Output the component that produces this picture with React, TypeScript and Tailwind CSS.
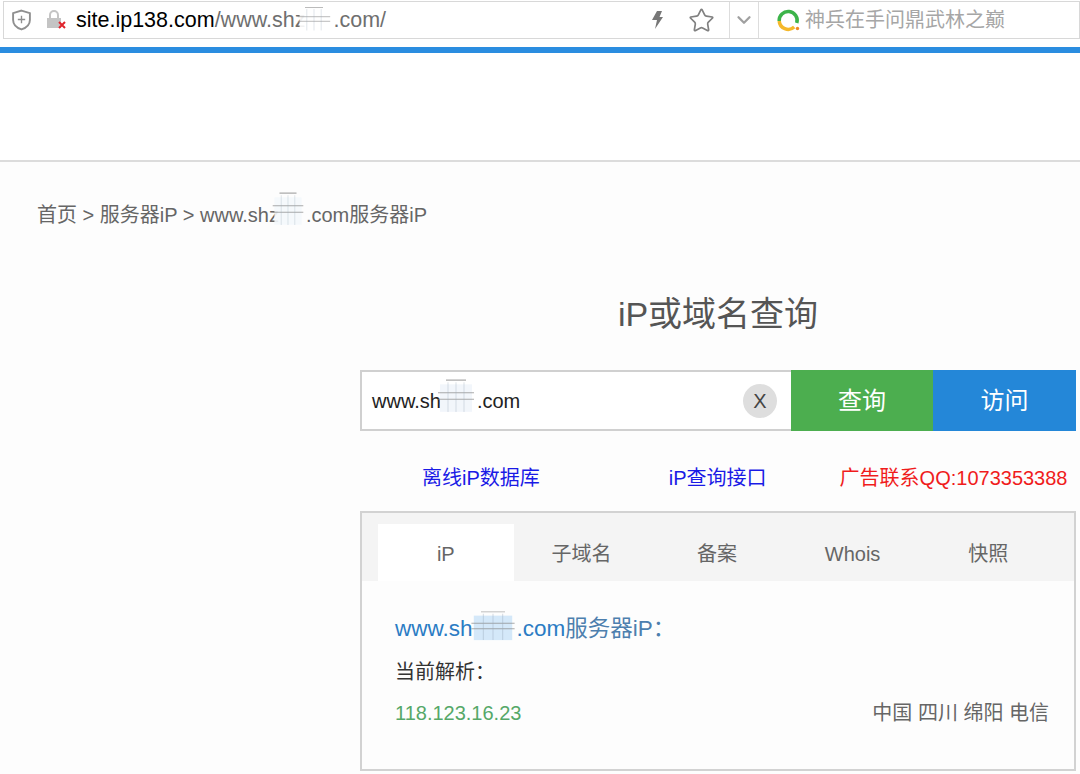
import { ChevronDown, Star } from "lucide-react";

const sans = "font-['Liberation_Sans','Noto_Sans_CJK_SC',sans-serif]";

// the hand-drawn scribble that hides part of the domain
function Scribble({ className, tint }: { className: string; tint: string }) {
  return (
    <svg className={`absolute ${className}`} viewBox="0 0 40 34" preserveAspectRatio="none" fill="none">
      <rect x="4" y="6" width="32" height="26" fill={tint} opacity="0.9" />
      <path d="M2 14H38M2 20H38M10 2H30" stroke="#888" strokeWidth="1" opacity="0.7" />
      <path d="M12 4V32M20 4V32M28 4V32" stroke="#9ab" strokeWidth="1" opacity="0.35" />
    </svg>
  );
}

function AddressBar() {
  return (
    <div className="h-[47px] bg-white pt-[1px]">
      <div className="flex h-[38px] items-center ml-[3px] border border-[#d8d8d8] bg-white">
        <svg className="ml-[7px] h-[24px] w-[21px] flex-none" viewBox="0 0 20 22" fill="none" stroke="#8f8f8f" strokeWidth="1.8">
          <path d="M10 2l8 2.5V11c0 4.500-3.500 7.500-8 9-4.500-1.500-8-4.500-8-9V4.500z" />
          <path d="M6.500 10.500h7M10 7v7" strokeWidth="1.300" />
        </svg>
        <svg className="ml-[14px] h-[20px] w-[22px] flex-none" viewBox="0 0 22 20" fill="none">
          <rect x="1" y="8" width="14" height="10" fill="#c4c4c4" />
          <path d="M4 8V5a4 4 0 0 1 8 0v3" stroke="#c4c4c4" strokeWidth="2" />
          <path d="M13 12l6 6M19 12l-6 6" stroke="#e0242c" strokeWidth="2" />
        </svg>
        <div className={`relative ml-[8px] mt-[1px] flex-none text-[21.500px] leading-none ${sans}`}>
          <span className="text-black">site.ip138.com</span>
          <span className="text-[#6f6f6f]">/www.shz</span>
          <span className="inline-block w-[28px]" />
          <span className="text-[#6f6f6f]">.com/</span>
          <Scribble className="left-[220px] top-[-4px] h-[26px] w-[36px]" tint="#ffffff" />
        </div>
        <div className="flex-1" />
        <svg className="h-[18px] w-[12px] flex-none" viewBox="0 0 12 18" fill="#777">
          <path d="M6 0h5L8.500 6H12L4 18l2-9H1z" />
        </svg>
        <Star className="ml-[25px] h-[27px] w-[27px] flex-none text-[#808080]" strokeWidth={1.500} />
        <div className="ml-[14px] flex h-full w-[30px] flex-none items-center justify-center border-x border-[#ddd]">
          <ChevronDown className="h-[22px] w-[22px] text-[#a0a0a0]" strokeWidth={2.500} />
        </div>
        <svg className="ml-[17px] h-[24px] w-[24px] flex-none" viewBox="0 0 24 24" fill="none" strokeWidth="3.500">
          <path d="M3.200 13a9 9 0 1 1 17.600 2" stroke="#3cb44a" />
          <path d="M3.200 13a9 9 0 0 0 15 6" stroke="#f5b82a" />
          <circle cx="21.500" cy="20.500" r="1.700" fill="#f08a24" />
        </svg>
        <span className={`ml-[5px] mr-[74px] text-[20px] leading-none text-[#a6a6a6] whitespace-nowrap ${sans}`}>
          神兵在手问鼎武林之巅
        </span>
      </div>
    </div>
  );
}

const tabs = ["iP", "子域名", "备案", "Whois", "快照"];

export default function App() {
  return (
    <div className={`h-[774px] w-[1080px] overflow-hidden bg-[#fdfdfd] ${sans}`}>
      <AddressBar />
      <div className="h-[6px] bg-[#2a8de0]" />
      <div className="h-[109px] bg-white border-b-2 border-[#dcdcdc]" />

      <div className="relative ml-[37px] mt-[41px] h-[24px] w-fit whitespace-nowrap text-[20px] leading-[24px] text-[#666]">
        首页 &gt; 服务器iP &gt; www.shz<span className="inline-block w-[27px]" />.com服务器iP
        <Scribble className="left-[234px] top-[-12px] h-[36px] w-[34px]" tint="#f4f8fc" />
      </div>

      <h1 className="ml-[360px] mt-[65px] w-[716px] text-center text-[34px] font-normal leading-[44px] text-[#555]">
        iP或域名查询
      </h1>

      <div className="ml-[360px] mt-[34px] flex h-[61px] w-[716px]">
        <div className="flex flex-1 items-center border-2 border-r-0 border-[#d0d0d0] bg-white pl-[10px] pr-[14px]">
          <div className="relative whitespace-nowrap text-[20px] text-[#222]">
            www.sh<span className="inline-block w-[36px]" />.com
            <Scribble className="left-[64px] top-[-8px] h-[36px] w-[40px]" tint="#f1f5fb" />
          </div>
          <div className="ml-auto flex h-[34px] w-[34px] items-center justify-center rounded-full bg-[#dedede] text-[20px] text-[#444]">
            X
          </div>
        </div>
        <button className="w-[142px] bg-[#4cae4f] text-[24px] text-white">查询</button>
        <button className="w-[143px] bg-[#2487d8] text-[24px] text-white">访问</button>
      </div>

      <div className="ml-[360px] mt-[35px] flex h-[24px] w-[716px] items-center whitespace-nowrap text-[20px] leading-[24px]">
        <a className="ml-[62px] text-[#1a1ae6]">离线iP数据库</a>
        <a className="ml-[129px] text-[#1a1ae6]">iP查询接口</a>
        <a className="ml-[73px] text-[#f01c1c]">广告联系QQ:1073353388</a>
      </div>

      <div className="ml-[360px] mt-[21px] h-[260px] w-[716px] border-2 border-[#d2d2d2] bg-[#fdfdfd]">
        <div className="flex h-[68px] items-end bg-[#f4f4f4] pl-[16px]">
          {tabs.map((t, i) => (
            <div
              key={t}
              className={`flex h-[57px] w-[135.600px] items-center justify-center pt-[3px] text-[20px] text-[#666] ${i === 0 ? "bg-white" : ""}`}
            >
              {t}
            </div>
          ))}
        </div>
        <div className="pl-[33px] pr-[25px] pt-[33px]">
          <div className="relative w-fit whitespace-nowrap text-[22.500px] leading-[30px] text-[#2b7cc4]">
            www.sh<span className="inline-block w-[44px]" />.com<span className="text-[#4d7fae]">服务器iP：</span>
            <Scribble className="left-[74px] top-[-4px] h-[32px] w-[48px]" tint="#cfe5f8" />
          </div>
          <div className="mt-[15px] text-[20px] leading-[26px] text-[#333]">当前解析：</div>
          <div className="mt-[15px] flex items-center justify-between text-[20px] leading-[26px]">
            <span className="text-[#55a868]">118.123.16.23</span>
            <span className="text-[#666]">中国 四川 绵阳 电信</span>
          </div>
        </div>
      </div>
    </div>
  );
}
